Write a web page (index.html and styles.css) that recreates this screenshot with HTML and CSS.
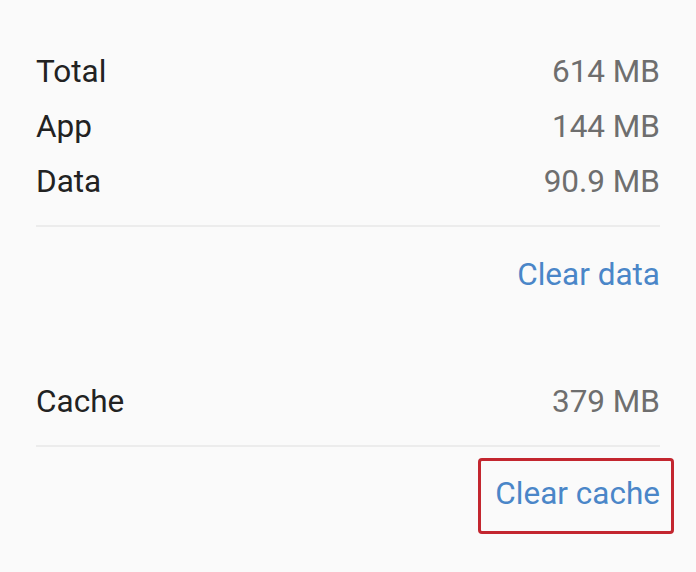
FILE: index.html
```html
<!DOCTYPE html>
<html lang="en">

<head>
    <meta charset="UTF-8">
    <meta name="viewport" content="width=device-width, initial-scale=1.0">
    <title>Storage</title>
    <link rel="stylesheet" href="styles.css">
</head>

<body>
    <div class="storage">
        <div class="row">
            <span class="label">Total</span>
            <span class="value">614 MB</span>
        </div>
        <div class="row">
            <span class="label">App</span>
            <span class="value">144 MB</span>
        </div>
        <div class="row">
            <span class="label">Data</span>
            <span class="value">90.9 MB</span>
        </div>
        <hr class="divider first">
        <div class="action clear-data">
            <span class="link">Clear data</span>
        </div>
        <div class="row cache">
            <span class="label">Cache</span>
            <span class="value">379 MB</span>
        </div>
        <hr class="divider second">
        <div class="action clear-cache">
            <span class="link highlight">Clear cache</span>
        </div>
    </div>
</body>

</html>
```

FILE: styles.css
```css
html, body {
    margin: 0;
    background: #fafafa;
}
body {
    width: 696px;
    height: 572px;
    overflow: hidden;
    font-family: Roboto, "Liberation Sans", sans-serif;
}
.storage {
    padding: 44px 36px 0;
}
.row {
    height: 55px;
    display: flex;
    justify-content: space-between;
    align-items: center;
    font-size: 31.5px;
}
.label {
    color: #222222;
}
.value {
    color: #6e6e6e;
}
.divider {
    border: none;
    height: 2px;
    background: #ececec;
    margin: 0;
}
.divider.first {
    margin-top: 16px;
}
.divider.second {
    margin-top: 16px;
}
.action {
    display: flex;
    justify-content: flex-end;
    align-items: center;
    font-size: 31.5px;
}
.clear-data {
    height: 96px;
}
.cache {
    margin-top: 51px;
}
.clear-cache {
    height: 94px;
}
.link {
    color: #4a86c8;
    line-height: 36px;
}
.highlight {
    position: relative;
}
.highlight::after {
    content: "";
    position: absolute;
    left: -17px;
    right: -14px;
    top: -18px;
    bottom: -22px;
    border: 3px solid #c3262f;
    border-radius: 4px;
}
```
